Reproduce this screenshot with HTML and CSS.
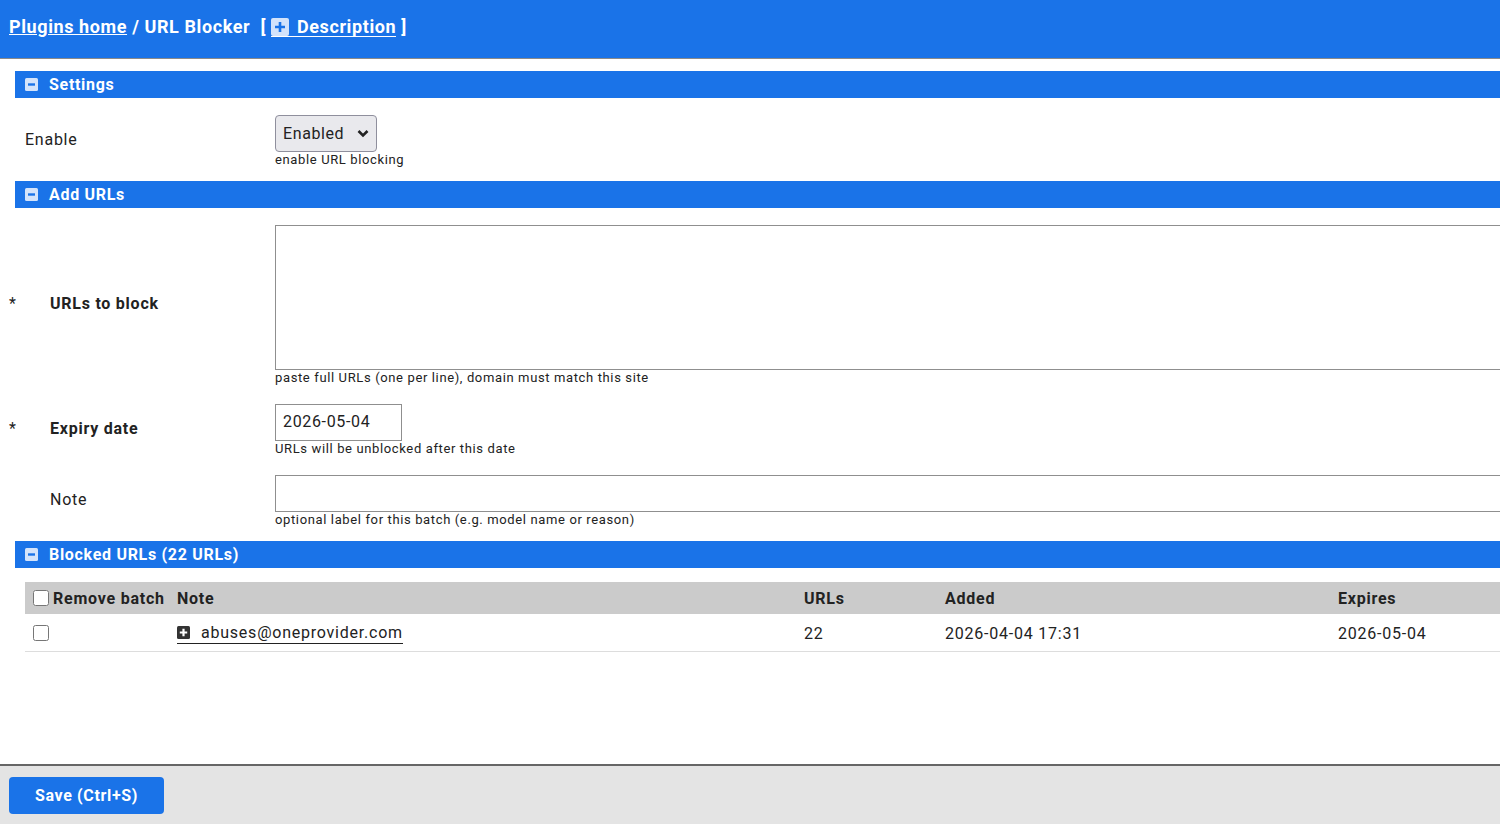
FILE: index.html
```html
<!DOCTYPE html>
<html lang="en">
  <head>
    <meta charset="UTF-8" />
    <title>URL Blocker</title>
    <link rel="stylesheet" href="styles.css">
  </head>
  <body>
    <!-- top bar -->
    <div id="topbar">
      <h1 class="crumbs">
        <a href="#">Plugins home</a> / URL Blocker&nbsp; [<a href="#" class="desc-link"><svg class="ico-big" viewBox="0 0 18 18"><rect width="18" height="18" rx="2" fill="#d3e3fb"/><path d="M9 4v10M4 9h10" stroke="#1a73e8" stroke-width="2.6"/></svg>Description</a> ]
      </h1>
    </div>

    <div id="main">
      <!-- settings -->
      <div class="sect-head">
        <svg class="ico" viewBox="0 0 13 13"><rect width="13" height="13" rx="1.5" fill="#d3e3fb"/><path d="M3 6.5h7" stroke="#1a73e8" stroke-width="2.4"/></svg>
        Settings
      </div>
      <div class="sect-body">
        <div class="row">
          <div class="lbl lbl-plain">Enable</div>
          <div class="field">
            <span class="sel-wrap">
              <select class="sel">
                <option>Enabled</option>
                <option>Disabled</option>
              </select>
              <svg class="chev" viewBox="0 0 12 8"><path d="M1.5 1.5L6 6l4.5-4.5" fill="none" stroke="#222" stroke-width="2.6"/></svg>
            </span>
            <div class="hint">enable URL blocking</div>
          </div>
        </div>
      </div>

      <!-- add urls -->
      <div class="sect-head">
        <svg class="ico" viewBox="0 0 13 13"><rect width="13" height="13" rx="1.5" fill="#d3e3fb"/><path d="M3 6.5h7" stroke="#1a73e8" stroke-width="2.4"/></svg>
        Add URLs
      </div>
      <div class="sect-body">
        <div class="row">
          <div class="lbl"><span class="star">*</span><b>URLs to block</b></div>
          <div class="field">
            <textarea class="txt-area"></textarea>
            <div class="hint">paste full URLs (one per line), domain must match this site</div>
          </div>
        </div>
        <div class="row">
          <div class="lbl"><span class="star">*</span><b>Expiry date</b></div>
          <div class="field">
            <input type="text" class="inp inp-date" value="2026-05-04" />
            <div class="hint">URLs will be unblocked after this date</div>
          </div>
        </div>
        <div class="row">
          <div class="lbl"><span class="star"></span>Note</div>
          <div class="field">
            <input type="text" class="inp inp-wide" value="" />
            <div class="hint">optional label for this batch (e.g. model name or reason)</div>
          </div>
        </div>
      </div>

      <!-- blocked urls -->
      <div class="sect-head">
        <svg class="ico" viewBox="0 0 13 13"><rect width="13" height="13" rx="1.5" fill="#d3e3fb"/><path d="M3 6.5h7" stroke="#1a73e8" stroke-width="2.4"/></svg>
        Blocked URLs (22 URLs)
      </div>
      <table id="list">
        <colgroup>
          <col style="width:146px" />
          <col style="width:627px" />
          <col style="width:141px" />
          <col style="width:393px" />
          <col />
        </colgroup>
        <tr>
          <th class="c-first"><label class="ck-lbl"><input type="checkbox" class="ck" />Remove batch</label></th>
          <th>Note</th>
          <th>URLs</th>
          <th>Added</th>
          <th>Expires</th>
        </tr>
        <tr>
          <td class="c-first"><input type="checkbox" class="ck" /></td>
          <td>
            <a href="#" class="batch-link">
              <svg class="ico" viewBox="0 0 13 13"><rect width="13" height="13" rx="1.5" fill="#333"/><path d="M6.5 2.8v7.4M2.8 6.5h7.4" stroke="#fff" stroke-width="2.2"/></svg>
              abuses@oneprovider.com</a>
          </td>
          <td>22</td>
          <td>2026-04-04 17:31</td>
          <td>2026-05-04</td>
        </tr>
      </table>
    </div>

    <!-- save bar -->
    <div id="footer">
      <button class="btn-save">Save (Ctrl+S)</button>
    </div>
  </body>
</html>
```

FILE: styles.css
```css
html,
body {
  margin: 0;
  padding: 0;
}

body {
  min-height: 100vh;
  display: flex;
  flex-direction: column;
  font-family: Roboto, "Liberation Sans", sans-serif;
  color: #222;
  background: #fff;
}

#topbar {
  height: 58px;
  background-color: #1a73e8;
  border-bottom: 1px solid #8a8a8a;
  display: flex;
  align-items: center;
  padding: 0 9px;
}

.crumbs {
  margin: 0 0 6px 0;
  font-size: 18px;
  font-weight: 700;
  color: #fff;
  letter-spacing: 0.6px;
}

.crumbs a {
  color: #fff;
}

.desc-link {
  text-decoration: none;
  display: inline-block;
  border-bottom: 1px solid #fff;
  line-height: 19px;
  margin-left: 5px;
}

.ico-big {
  width: 18px;
  height: 18px;
  vertical-align: -3px;
  margin-right: 8px;
}

#main {
  flex: 1;
  overflow: hidden;
  padding-top: 12px;
}

.sect-head {
  margin-left: 15px;
  height: 27px;
  background-color: #1a73e8;
  color: #fff;
  font-size: 16px;
  font-weight: 700;
  letter-spacing: 0.7px;
  display: flex;
  align-items: center;
  gap: 11px;
  padding-left: 10px;
}

.ico {
  width: 13px;
  height: 13px;
  flex: none;
}

.sect-body {
  padding: 8px 0 4px 0;
}

.row {
  display: grid;
  grid-template-columns: 275px 1fr;
  align-items: center;
  padding: 9px 0;
}

.lbl {
  font-size: 16px;
  letter-spacing: 0.75px;
  padding-bottom: 4px;
}

.lbl-plain {
  padding-left: 25px;
}

.star {
  display: inline-block;
  width: 41px;
  margin-left: 9px;
}

.field {
  min-width: 0;
}

.hint {
  font-size: 13px;
  line-height: 16px;
  letter-spacing: 0.63px;
}

.sel-wrap {
  position: relative;
  display: inline-block;
}

.sel {
  appearance: none;
  -webkit-appearance: none;
  width: 102px;
  height: 37px;
  padding: 0 0 0 7px;
  font-family: Roboto, "Liberation Sans", sans-serif;
  font-size: 16px;
  letter-spacing: 0.6px;
  color: #222;
  background-color: #e9e9ed;
  border: 1px solid #8f8f9d;
  border-radius: 4px;
  display: block;
}

.chev {
  position: absolute;
  right: 8px;
  top: 14px;
  width: 12px;
  height: 9px;
  pointer-events: none;
}

.txt-area {
  display: block;
  box-sizing: border-box;
  width: 1300px;
  height: 145px;
  border: 1px solid #8f8f8f;
  resize: none;
  margin: 0;
}

.inp {
  display: block;
  box-sizing: border-box;
  height: 37px;
  padding: 0 7px;
  margin: 0;
  border: 1px solid #8f8f8f;
  font-family: Roboto, "Liberation Sans", sans-serif;
  font-size: 16px;
  letter-spacing: 0.65px;
  color: #222;
}

.inp-date {
  width: 127px;
  padding-bottom: 3px;
}

.inp-wide {
  width: 1300px;
}

#list {
  margin: 14px 0 0 25px;
  width: calc(100% - 25px);
  border-collapse: collapse;
  table-layout: fixed;
  font-size: 16px;
  letter-spacing: 0.77px;
}

#list th {
  background-color: #cbcbcb;
  height: 32px;
  padding: 0 6px;
  text-align: left;
  font-weight: 700;
}

#list td {
  height: 36px;
  padding: 1px 6px 0 6px;
  border-bottom: 1px solid #ddd;
}

#list .c-first {
  padding-left: 8px;
}

.ck-lbl {
  display: flex;
  align-items: center;
  gap: 4px;
}

.ck {
  width: 16px;
  height: 16px;
  margin: 0;
  display: block;
}

.batch-link {
  display: inline-flex;
  align-items: center;
  gap: 11px;
  color: #222;
  text-decoration: none;
  border-bottom: 1px solid #222;
  padding-bottom: 1px;
}

#footer {
  height: 60px;
  border-top: 2px solid #666;
  background-color: #e4e4e4;
  padding: 11px 9px 0 9px;
  box-sizing: border-box;
  flex: none;
}

.btn-save {
  width: 155px;
  height: 37px;
  border: none;
  border-radius: 4px;
  background-color: #1a73e8;
  color: #fff;
  font-family: Roboto, "Liberation Sans", sans-serif;
  font-size: 16px;
  font-weight: 700;
  letter-spacing: 0.65px;
}
```
